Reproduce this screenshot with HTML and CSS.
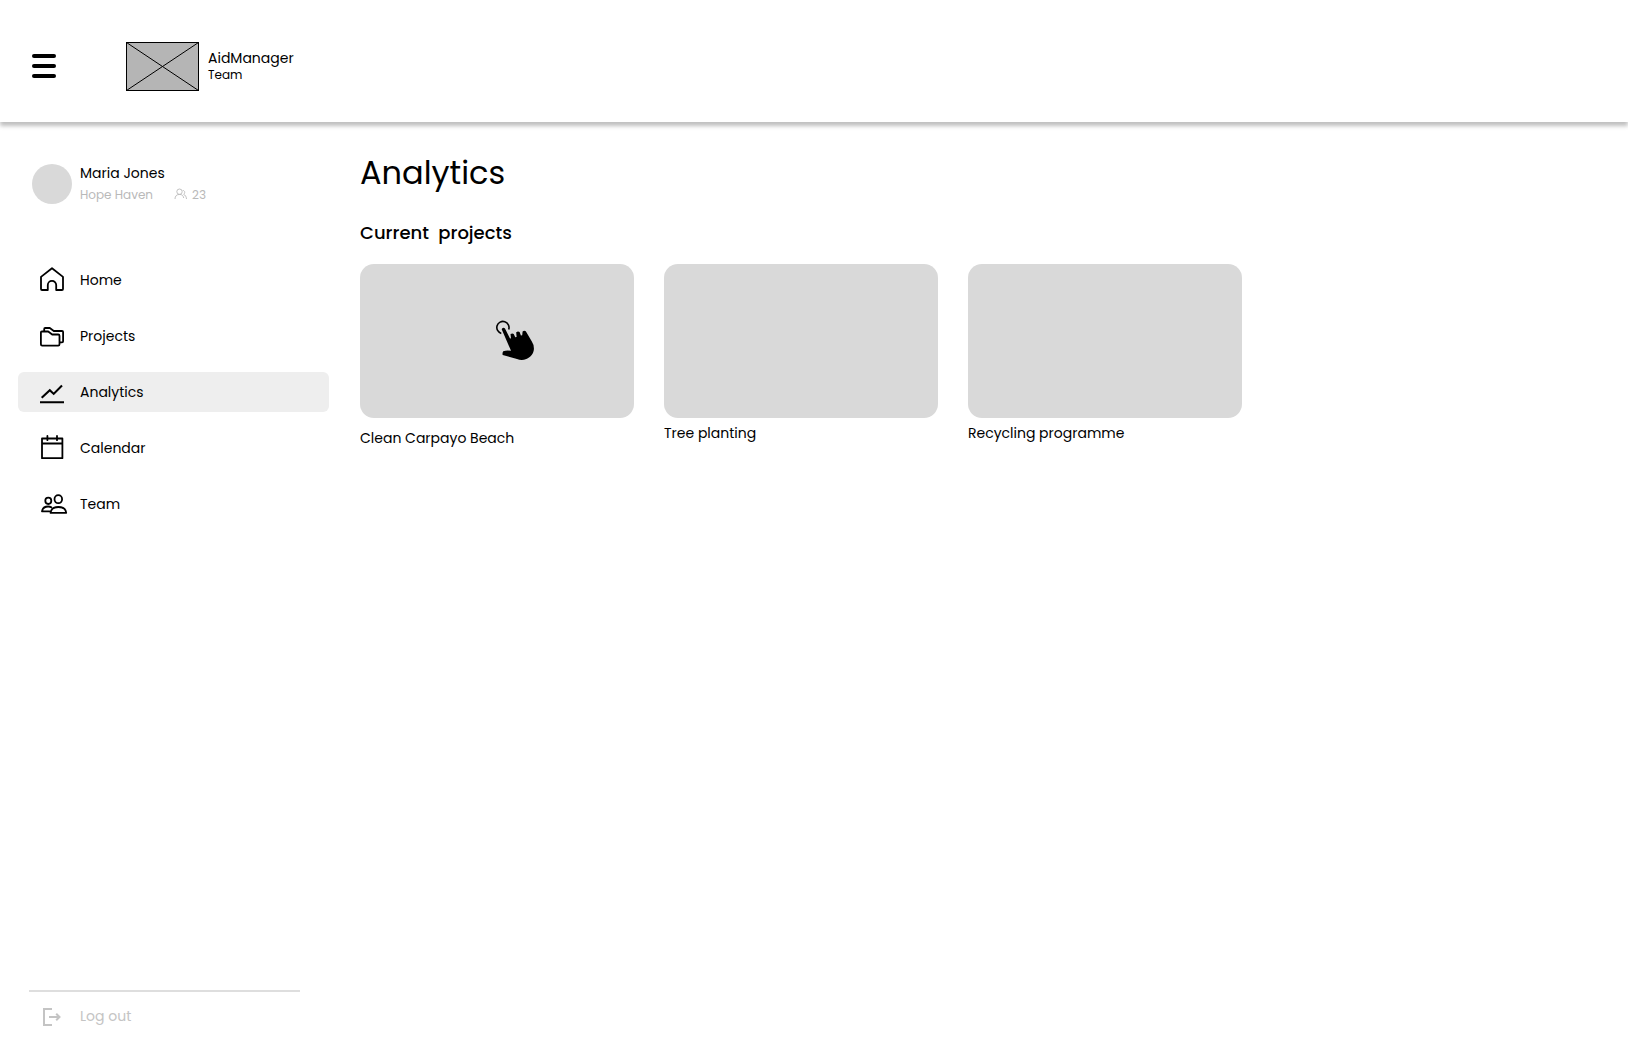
FILE: index.html
```html
<!DOCTYPE html>
<html lang="en">
<head>
<meta charset="utf-8">
<title>AidManager – Analytics</title>
<link rel="stylesheet" href="styles.css">
</head>
<body>
<header class="topbar">
  <button class="menu" aria-label="Menu"><span></span><span></span><span></span></button>
  <svg class="logo" width="73" height="49" viewBox="0 0 73 49"><rect x=".5" y=".5" width="72" height="48" fill="#b5b5b5" stroke="#000"/><path d="M.5.5l72 48M72.5.5l-72 48" stroke="#000" fill="none"/></svg>
  <div class="brand"><span class="brand-name">AidManager</span><span class="brand-sub">Team</span></div>
</header>
<div class="shell">
  <aside class="sidebar">
    <div class="profile">
      <div class="avatar"></div>
      <div class="who">
        <span class="user">Maria Jones</span>
        <div class="meta"><span>Hope Haven</span>
          <svg width="14" height="12" viewBox="0 0 14 12" fill="none" stroke="#b9b9b9" stroke-width=".9"><circle cx="5.500" cy="3.700" r="2.700"/><path d="M1 11C1 8.200 2.600 6.400 5.500 6.400s3.900 1.700 4.200 3.600M8.800 2.500c1.900-.2 2.700 2.300.9 3.900 1.700.7 2.600 2.300 2.800 4.600"/></svg>
          <span>23</span></div>
      </div>
    </div>
    <nav class="nav">
      <a class="item"><svg width="28" height="28" viewBox="0 0 28 28"><path d="M3 10.900 14 2.300l11 8.600V23q0 1-1 1h-5.800v-5a4.200 4.200 0 0 0-8.400 0V24H4q-1 0-1-1z"/></svg><span>Home</span></a>
      <a class="item"><svg width="28" height="28" viewBox="0 0 28 28"><path d="M3.900 9.500h6.300l4 3H20.200q1.300 0 1.300 1.300v8.500q0 1.300-1.300 1.300H4.200q-1.300 0-1.300-1.300V10.500q0-1 1-1zM6.200 9.300V7q0-1 1-1h4.600l4 3h8.200q1.100 0 1.100 1.100v9.200q0 1.100-1.100 1.100h-2.300"/></svg><span>Projects</span></a>
      <a class="item active"><svg width="28" height="28" viewBox="0 0 28 28"><path class="heavy" d="M3.700 19.700l8.100-7.500 3.900 3.700 8.300-8.400M2 24.200h24"/></svg><span>Analytics</span></a>
      <a class="item"><svg width="28" height="28" viewBox="0 0 28 28"><path d="M4 4.500h20.400v19.700H4zM4 9.500h20.400M9.400 1.900v4.300M19 1.900v4.300"/></svg><span>Calendar</span></a>
      <a class="item"><svg width="28" height="28" viewBox="0 0 28 28"><ellipse cx="10.300" cy="10.800" rx="3" ry="3.200"/><ellipse cx="20.300" cy="9.200" rx="3.800" ry="4"/><path d="M12.600 22.900q.6-5.900 7.800-5.900t7.800 5.900zM13.300 17.300q-1.300-.8-3.200-.8-5.300 0-6.100 4.900h7.500"/></svg><span>Team</span></a>
    </nav>
    <div class="logout">
      <svg width="20" height="20" viewBox="0 0 20 20"><path d="M10 2H2v16h8M7 10h10.500M14.200 6.700l3.300 3.300-3.300 3.300"/></svg><span>Log out</span>
    </div>
  </aside>
  <main class="main">
    <h1>Analytics</h1>
    <h2>Current&nbsp; projects</h2>
    <div class="cards">
      <article><div class="thumb">
        <svg width="40" height="42" viewBox="0 0 40 42"><path d="M6.300 13.400a6.100 6.100 0 1 1 7.400-3.900" fill="none" stroke="#000" stroke-width="1.600"/><path d="M7 10q-.7-1.500.8-2.100t2.300.8L14.900 18.300l1.100.2-.5-4.400q1.800-1.300 3.200-.2l1.600 3.300 1.300-.2-.4-4.700q1.800-1.500 3.400-.2l1.300 3.500 1.300-.3.400-3.800q1.600-1.400 3.200-.2l5.900 9.900q2.400 3.500 2.200 8c-.3 4.500-3 7.500-7.600 9.800-3.300 1.300-6.300 1.200-9.300-.1L7.700 35q-.6-1.900.5-3.800 3.800-1.200 7.800-.4z"/></svg>
      </div><p class="low">Clean Carpayo Beach</p></article>
      <article><div class="thumb"></div><p>Tree planting</p></article>
      <article><div class="thumb"></div><p>Recycling programme</p></article>
    </div>
  </main>
</div>
</body>
</html>
```
FILE: styles.css
```css
* { box-sizing: border-box; }
body { margin: 0; background: #fff; color: #000; font: 14px/20px Poppins, Inter, sans-serif; height: 1053px; overflow: hidden; }
.topbar { height: 122px; display: flex; align-items: flex-start; padding: 42px 32px 0; box-shadow: 0 4px 4px rgba(0,0,0,.25); }
.menu { border: 0; padding: 0; margin: 12px 70px 0 0; background: none; width: 24px; display: flex; flex-direction: column; gap: 6px; }
.menu span { height: 4px; border-radius: 2px; background: #000; }
.brand { display: flex; flex-direction: column; align-items: flex-start; margin: 6px 0 0 9px; }
.brand-name { line-height: 20px; }
.brand-sub { font-size: 12px; line-height: 14px; }
.shell { display: flex; height: 931px; }
.sidebar { width: 360px; padding: 42px 31.5px 26px 18px; display: flex; flex-direction: column; }
.profile { display: flex; gap: 8px; padding-left: 14px; height: 40px; }
.avatar { width: 40px; height: 40px; border-radius: 50%; background: #d9d9d9; }
.who { margin-top: -1px; white-space: nowrap; }
.user { display: inline-block; }
.meta { display: flex; align-items: center; font-size: 12px; color: #b9b9b9; margin-top: 2px; }
.meta svg { margin: -2px 4px 0 21px; }
.nav { display: flex; flex-direction: column; gap: 16px; margin-top: 56px; }
.item { display: flex; align-items: center; height: 40px; padding-left: 20px; gap: 14px; border-radius: 6px; }
.active { background: #eee; }
.item svg { fill: none; stroke: #000; stroke-width: 1.8; stroke-linejoin: round; stroke-linecap: round; overflow: visible; }
.item .heavy { stroke-width: 2.1; stroke-linecap: butt; stroke-linejoin: miter; }
.logout { margin: auto 28.5px 0 11px; border-top: 2px solid #dedede; height: 37px; padding: 15px 0 0 13px; display: flex; align-items: center; gap: 18px; color: #c4c4c4; }
.logout svg { fill: none; stroke: #c4c4c4; stroke-width: 2; }
.logout span { margin-top: -2px; }
.main { padding-top: 27px; }
h1 { margin: 0; font-size: 32px; font-weight: 400; line-height: 48px; }
h2 { margin: 22px 0 0; font-size: 18px; font-weight: 500; line-height: 27px; }
.cards { display: flex; gap: 30px; margin-top: 18px; }
article { width: 274px; }
.thumb { height: 154px; border-radius: 14px; background: #d9d9d9; padding: 56px 0 0 135px; }
p { margin: 5px 0 0; }
.low { margin-top: 10px; }
```
